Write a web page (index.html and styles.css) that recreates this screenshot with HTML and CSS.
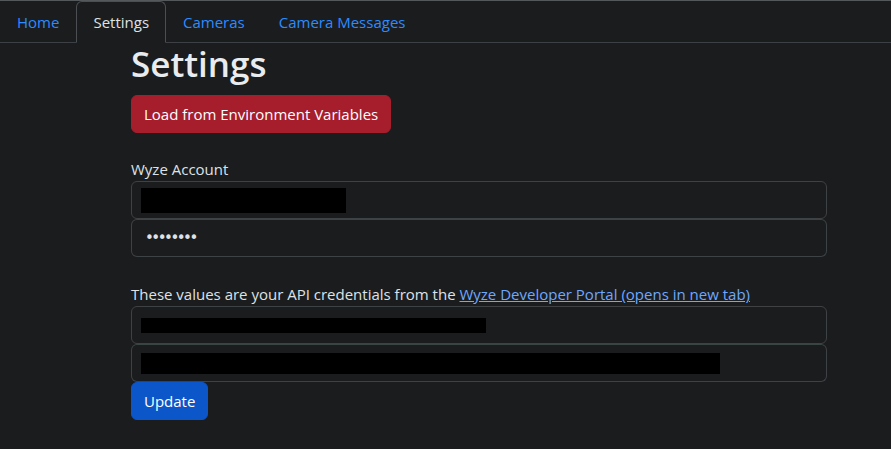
FILE: index.html
```html
<!DOCTYPE html>
<html lang="en">
<head>
<meta charset="utf-8">
<title>Settings</title>
<link rel="stylesheet" href="styles.css">
</head>
<body>
<nav class="tabs">
  <a class="tab" href="#">Home</a>
  <a class="tab active" href="#">Settings</a>
  <a class="tab" href="#">Cameras</a>
  <a class="tab" href="#">Camera Messages</a>
</nav>
<main class="container">
  <h1 class="title">Settings</h1>
  <button class="btn btn-danger" type="button">Load from Environment Variables</button>
  <form class="form">
    <section class="group">
      <label class="label">Wyze Account</label>
      <div class="field"><span class="redact redact-email"></span></div>
      <div class="field"><span class="dots">••••••••</span></div>
    </section>
    <section class="group group-api">
      <p class="label">These values are your API credentials from the <a class="link" href="#">Wyze Developer Portal (opens in new tab)</a></p>
      <div class="field field-api"><span class="redact redact-id"></span></div>
      <div class="field field-api2"><span class="redact redact-key"></span></div>
    </section>
    <button class="btn btn-primary" type="button">Update</button>
  </form>
</main>
</body>
</html>
```
FILE: styles.css
```css
* { box-sizing: border-box; }
html, body { margin: 0; padding: 0; }
body {
  background: #1b1c1e;
  color: #dee2e6;
  font-family: "Open Sans", "Noto Sans", sans-serif;
  font-size: 15px;
  line-height: 24px;
  border-top: 1px solid #55585b;
  min-height: 449px;
}
.tabs {
  display: flex;
  border-bottom: 1px solid #3d4045;
  height: 42px;
}
.tab {
  display: block;
  padding: 8px 16px;
  border: 1px solid transparent;
  border-top-left-radius: 6px;
  border-top-right-radius: 6px;
  color: #2b8cff;
  text-decoration: none;
  margin-bottom: -1px;
  height: 42px;
}
.tab.active {
  color: #dee2e6;
  background: #1b1c1e;
  border-color: #4b4f54 #4b4f54 #1b1c1e;
}
.container {
  width: 696px;
  margin-left: 131px;
}
.title {
  font-size: 35px;
  line-height: 42px;
  font-weight: 600;
  margin: 0 0 10px;
  color: #e9ecef;
}
.btn {
  display: inline-block;
  font: inherit;
  line-height: 24px;
  padding: 6px 12px;
  border: 1px solid transparent;
  border-radius: 6px;
  color: #fff;
}
.btn-danger { background: #a61d2c; border-color: #a61d2c; }
.btn-primary { background: #0b56c9; border-color: #0b56c9; }
.form { margin-top: 24px; }
.group { display: flex; flex-direction: column; }
.group-api { margin-top: 25px; }
.label { margin: 0; display: block; }
.link { color: #6ea8fe; }
.field {
  height: 38px;
  border: 1px solid #3f4245;
  border-radius: 6px;
  background: #1b1c1e;
  padding: 8px 9px;
  display: flex;
  align-items: center;
}
.field + .field { border-top-color: #3a4543; }
.redact { display: block; background: #000; }
.redact-email { width: 205px; height: 25px; }
.redact-id { width: 345px; height: 15px; }
.redact-key { width: 579px; height: 21px; }
.dots { padding-left: 4px; font-size: 15px; letter-spacing: -2.5px; color: #dee2e6; font-family: "DejaVu Sans", sans-serif; }
```
